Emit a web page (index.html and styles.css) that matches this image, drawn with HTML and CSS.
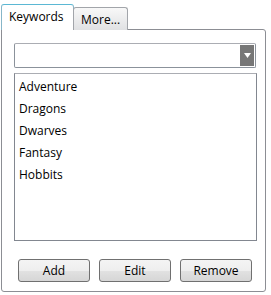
FILE: index.html
```html
<!DOCTYPE html>
<html>
<head>
<meta charset="utf-8">
<link rel="stylesheet" href="styles.css">
</head>
<body>
<div class="window">
  <div class="tabs">
    <div class="tab active">Keywords</div>
    <div class="tab">More...</div>
  </div>
  <div class="panel">
    <div class="combo">
      <div class="combo-field"></div>
      <div class="combo-btn">
        <svg width="7" height="5" viewBox="0 0 7 5"><path d="M0 0H7L3.5 5Z" fill="#fff"/></svg>
      </div>
    </div>
    <div class="list">
      <div class="item">Adventure</div>
      <div class="item">Dragons</div>
      <div class="item">Dwarves</div>
      <div class="item">Fantasy</div>
      <div class="item">Hobbits</div>
    </div>
    <div class="buttons">
      <button class="btn">Add</button>
      <button class="btn">Edit</button>
      <button class="btn">Remove</button>
    </div>
  </div>
</div>
</body>
</html>
```
FILE: styles.css
```css
html, body {
  margin: 0;
  padding: 0;
  background: #fff;
}
body {
  font-family: "Open Sans", "Liberation Sans", sans-serif;
  font-size: 12px;
  color: #000;
}
.window {
  width: 265px;
  padding: 4px 0 0 1px;
}
.tabs {
  display: flex;
  align-items: flex-end;
  height: 26px;
  position: relative;
  z-index: 1;
  margin-bottom: -1px;
}
.tab {
  box-sizing: border-box;
  border: 1px solid #8c8e94;
  border-bottom: none;
  border-radius: 3px 3px 0 0;
  padding: 0 8px;
  display: flex;
  align-items: center;
}
.tab.active {
  width: 73px;
  height: 26px;
  background: #fff;
  border-color: #87b6c8;
  border-top-color: #5bb8d4;
  padding-left: 7px;
  padding-bottom: 2px;
}
.tab:not(.active) {
  width: 55px;
  height: 23px;
  margin-left: -1px;
  background: linear-gradient(#f8f8f8, #e0e1e3);
  border-color: #a2a5aa;
  padding-left: 7px;
  padding-top: 1px;
}
.panel {
  box-sizing: border-box;
  width: 265px;
  height: 263px;
  border: 1px solid #8c8e94;
  border-radius: 0 3px 3px 3px;
  padding: 13px 9px 9px 12px;
  display: flex;
  flex-direction: column;
}
.combo {
  box-sizing: border-box;
  height: 25px;
  width: 242px;
  border: 1px solid #8b929b;
  border-top-color: #abadb3;
  border-radius: 2px;
  display: flex;
  padding: 1px;
  background: #fff;
}
.combo-field { flex: 1; }
.combo-btn {
  width: 14px;
  background: #777;
  display: flex;
  align-items: center;
  justify-content: center;
}
.list {
  box-sizing: border-box;
  margin-top: 5px;
  width: 243px;
  height: 168px;
  border: 1px solid #828790;
  border-top-color: #abadb3;
  padding: 2px 4px;
}
.item {
  height: 22px;
  line-height: 22px;
}
.buttons {
  display: flex;
  gap: 9px;
  margin-top: 18px;
  padding-left: 4px;
}
.btn {
  box-sizing: border-box;
  width: 72px;
  height: 23px;
  font: inherit;
  color: #000;
  border: 1px solid #707070;
  border-radius: 3px;
  background: linear-gradient(#f4f4f4 0%, #eeeeee 50%, #e2e2e2 50%, #d6d6d6 100%);
  padding: 0;
}
```
